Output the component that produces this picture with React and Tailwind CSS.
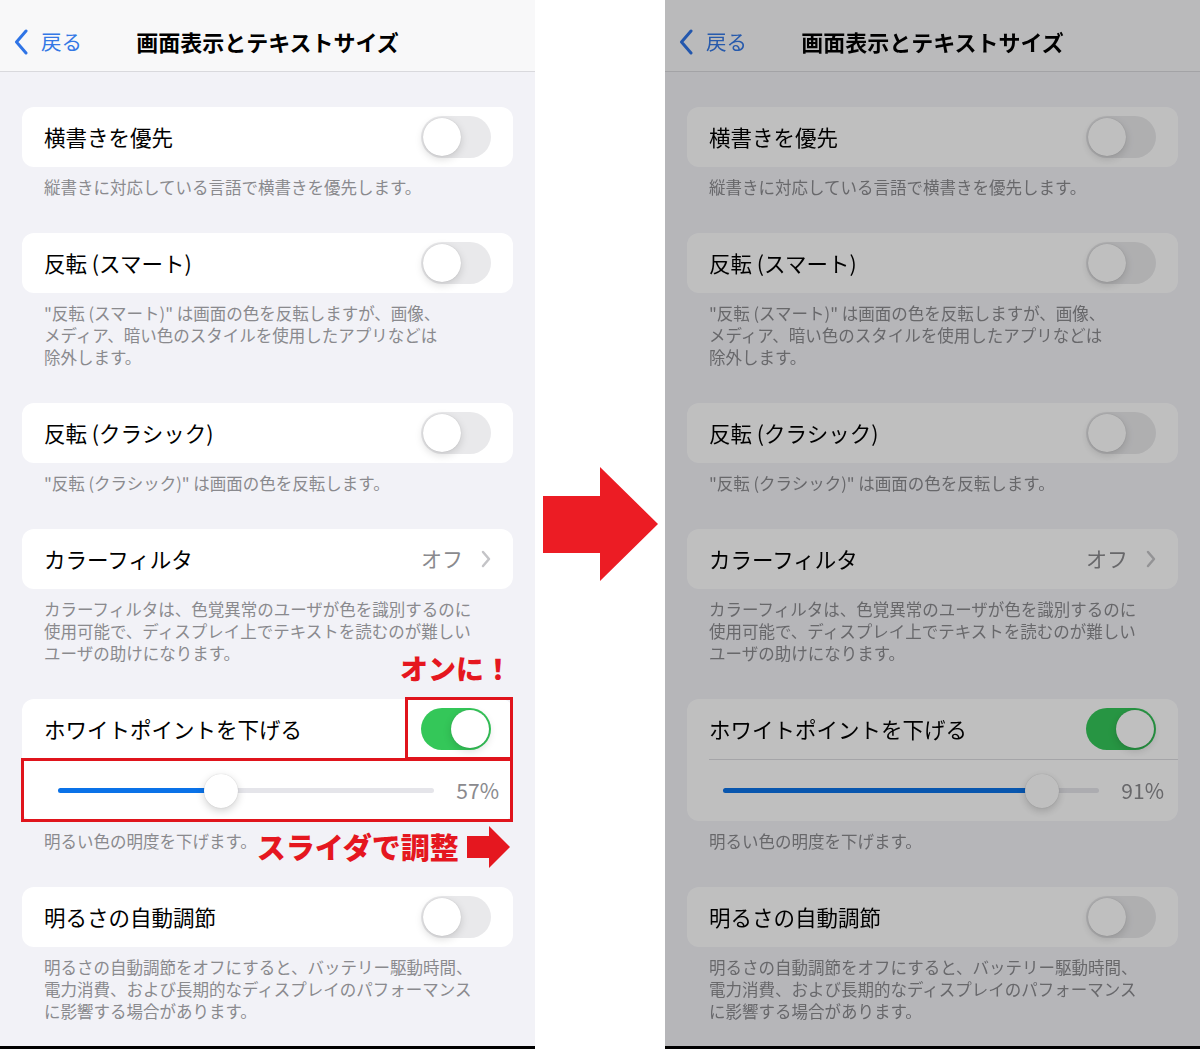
import React from 'react';

function Toggle({ on }) {
  return (
    <div className={on ? "flex h-[42px] w-[70px] items-center justify-end rounded-full bg-[#34c759] p-[2px]" : "flex h-[42px] w-[70px] items-center rounded-full bg-[#e9e9eb] p-[2px]"}>
      <div className="h-[38px] w-[38px] rounded-full bg-white shadow-[0_3px_8px_rgba(0,0,0,0.15),0_0_1px_rgba(0,0,0,0.2)]" />
    </div>
  );
}

function Row({ label, children }) {
  return (
    <div className="flex h-[60px] items-center justify-between pl-[22px] pr-[22px]">
      <span className="text-[21.5px] text-black">{label}</span>
      {children}
    </div>
  );
}

function Footer({ lines, last, children }) {
  return (
    <div className={last ? "mt-[9px] pl-[22px] text-[16.5px] leading-[22px] text-[#8a8a8e]" : "mb-[35px] mt-[9px] pl-[22px] text-[16.5px] leading-[22px] text-[#8a8a8e]"}>
      {lines.map((l, i) => (
        <div key={i} className="flex h-[22px] items-center whitespace-nowrap">
          {l}
          {i === lines.length - 1 && children}
        </div>
      ))}
    </div>
  );
}

function Panel({ value, thumb, annotated }) {
  return (
    <div className="flex h-full w-[535px] flex-col bg-[#f2f2f7]">
      <div className="grid h-[72px] shrink-0 grid-cols-[1fr_auto_1fr] items-center border-b border-[#d9d9dd] bg-[#f8f8f9] pt-[12px]">
        <div className="flex items-center gap-[13px] pl-[14px]">
          <svg width="14" height="26" viewBox="0 0 14 26">
            <path d="M12 2 L2.5 13 L12 24" fill="none" stroke="#2f74e6" strokeWidth="3" strokeLinecap="round" strokeLinejoin="round" />
          </svg>
          <span className="text-[20.5px] text-[#3478e5]">戻る</span>
        </div>
        <span className="text-[22px] font-bold text-black">画面表示とテキストサイズ</span>
        <div />
      </div>

      <div className="shrink-0 px-[22px] pt-[35px]">
        <div className="rounded-[12px] bg-white">
          <Row label="横書きを優先"><Toggle /></Row>
        </div>
        <Footer lines={["縦書きに対応している言語で横書きを優先します。"]} />

        <div className="rounded-[12px] bg-white">
          <Row label="反転 (スマート)"><Toggle /></Row>
        </div>
        <Footer lines={['"反転 (スマート)" は画面の色を反転しますが、画像、', "メディア、暗い色のスタイルを使用したアプリなどは", "除外します。"]} />

        <div className="rounded-[12px] bg-white">
          <Row label="反転 (クラシック)"><Toggle /></Row>
        </div>
        <Footer lines={['"反転 (クラシック)" は画面の色を反転します。']} />

        <div className="rounded-[12px] bg-white">
          <Row label="カラーフィルタ">
            <div className="flex items-center gap-[18px]">
              <span className="text-[21px] text-[#8a8a8e]">オフ</span>
              <svg width="10" height="18" viewBox="0 0 10 18">
                <path d="M2 2 L8 9 L2 16" fill="none" stroke="#c4c4c7" strokeWidth="2.5" strokeLinecap="round" strokeLinejoin="round" />
              </svg>
            </div>
          </Row>
        </div>
        <Footer lines={["カラーフィルタは、色覚異常のユーザが色を識別するのに", "使用可能で、ディスプレイ上でテキストを読むのが難しい", "ユーザの助けになります。"]} />

        <div className="relative rounded-[12px] bg-white">
          <Row label="ホワイトポイントを下げる"><Toggle on /></Row>
          <div className="ml-[22px] h-px bg-[#dcdce0]" />
          <div className="flex h-[61px] items-center pl-[36px] pr-[14px]">
            <div className="relative h-[5px] w-[376px] rounded-full bg-[#e5e5ea]">
              <div className="h-full rounded-full bg-[#0a72e8]" style={{ width: `${thumb}%` }} />
              <div
                className="absolute top-1/2 h-[34px] w-[34px] -translate-x-1/2 -translate-y-1/2 rounded-full bg-white shadow-[0_3px_8px_rgba(0,0,0,0.18),0_0_1px_rgba(0,0,0,0.2)]"
                style={{ left: `${thumb}%` }}
              />
            </div>
            <span className="ml-auto text-[21px] text-[#8a8a8e]">{value}</span>
          </div>

          {annotated && (
            <>
              <span className="absolute right-[1px] top-[-45px] text-[28px] font-black leading-none text-[#e5171f]">オンに！</span>
              <div className="absolute left-[383px] top-[-2px] h-[63px] w-[108px] border-[3px] border-[#e0141c]" />
              <div className="absolute left-[-1px] top-[59px] h-[64px] w-[492px] border-[3px] border-[#e0141c]" />
            </>
          )}
        </div>
        <Footer lines={["明るい色の明度を下げます。"]}>
          {annotated && (
            <>
              <span className="relative top-[5px] text-[29px] font-black leading-none text-[#e5171f]">スライダで調整</span>
              <svg className="relative top-[6px] ml-[8px]" width="43" height="42" viewBox="0 0 43 42">
                <polygon points="0,10 22,10 22,0 43,21 22,42 22,32 0,32" fill="#e5171f" />
              </svg>
            </>
          )}
        </Footer>

        <div className="rounded-[12px] bg-white">
          <Row label="明るさの自動調節"><Toggle /></Row>
        </div>
        <Footer last lines={["明るさの自動調節をオフにすると、バッテリー駆動時間、", "電力消費、および長期的なディスプレイのパフォーマンス", "に影響する場合があります。"]} />
      </div>

      <div className="flex-1" />
      <div className="h-[3px] shrink-0 bg-black" />
    </div>
  );
}

export default function App() {
  return (
    <div className="flex h-[1049px] w-[1200px] overflow-hidden bg-white font-['Noto_Sans_CJK_JP',sans-serif]">
      <Panel value="57%" thumb={43.4} annotated />
      <div className="flex w-[130px] items-center justify-center">
        <svg width="115" height="115" viewBox="0 0 115 115">
          <polygon points="0,29 57,29 57,0 115,57 57,114 57,86 0,86" fill="#ec1c24" />
        </svg>
      </div>
      <div className="h-full brightness-75">
        <Panel value="91%" thumb={84.8} />
      </div>
    </div>
  );
}
